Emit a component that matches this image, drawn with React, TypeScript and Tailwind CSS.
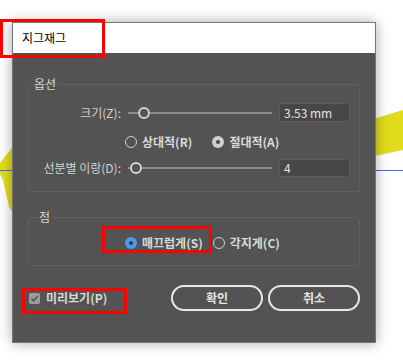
import React from "react";

function Slider({ pos }: { pos: number }) {
  return (
    <div className="relative w-[146px] h-[12px]">
      <div className="absolute top-[5px] left-[2px] right-0 h-[2px] bg-[#8a8a8a]" />
      <div
        className="absolute top-0 w-[12px] h-[12px] rounded-full border-[2.5px] border-[#d2d2d2] bg-[#535353]"
        style={{ left: pos - 6 }}
      />
    </div>
  );
}

function Radio({ label, state }: { label: string; state: "off" | "on" | "blue" }) {
  return (
    <div className="flex items-center gap-[5px]">
      {state === "off" && (
        <div className="w-[12px] h-[12px] rounded-full border-[1.5px] border-[#cfcfcf]" />
      )}
      {state === "on" && (
        <div className="w-[12px] h-[12px] rounded-full bg-[#d0d0d0] flex items-center justify-center">
          <div className="w-[4px] h-[4px] rounded-full bg-[#444]" />
        </div>
      )}
      {state === "blue" && (
        <div className="w-[12px] h-[12px] rounded-full bg-[#4a9cf2] flex items-center justify-center">
          <div className="w-[4px] h-[4px] rounded-full bg-[#3a3a3a]" />
        </div>
      )}
      <span className="text-[12px] leading-[16px] font-semibold text-[#dadada]">{label}</span>
    </div>
  );
}

export default function App() {
  return (
    <div className="relative w-[403px] h-[361px] bg-white overflow-hidden font-[family-name:'Noto_Sans_CJK_KR','Noto_Sans',sans-serif]">
      <svg className="absolute inset-0" width="403" height="361">
        <polygon points="370,120 403,110 403,150 370,157" fill="#e2dc1e" />
        <polygon points="14,145 0,163 0,174 3,180 9,207 14,214" fill="#e2dc1e" />
        <line x1="0" y1="170.5" x2="403" y2="170.5" stroke="#3b6ff0" strokeWidth="1" />
      </svg>

      <div className="relative ml-[12px] mt-[22px] w-[364px] h-[321px] bg-[#535353] border border-[#767676] shadow-[0_0_12px_rgba(0,0,0,0.35)] flex flex-col">
        <div className="h-[30px] bg-white flex items-center pl-[9px]">
          <span className="text-[12px] text-black">지그재그</span>
        </div>

        <div className="px-[15px]">
          <fieldset className="border border-[#606060] rounded-[3px] mt-[23px]">
            <legend className="ml-[4px] px-[1px] text-[12px] leading-[16px] text-[#d6d6d6]">옵션</legend>
            <div className="flex flex-col pt-[11px] pb-[14px]">
              <div className="flex items-center h-[19px]">
                <div className="w-[92px] text-right text-[12px] text-[#d2d2d2]">크기(Z):</div>
                <div className="ml-[5px]">
                  <Slider pos={18} />
                </div>
                <div className="ml-[7px] w-[71px] h-[19px] bg-[#474747] border border-[#5c5c5c] rounded-[2px] flex items-center pl-[4px] text-[12px] text-[#e6e6e6]">
                  3.53 mm
                </div>
              </div>
              <div className="flex items-center h-[16px] mt-[12px] pl-[96px] gap-[20px]">
                <Radio label="상대적(R)" state="off" />
                <Radio label="절대적(A)" state="on" />
              </div>
              <div className="flex items-center h-[18px] mt-[9px]">
                <div className="w-[92px] text-right text-[12px] text-[#d2d2d2]">선분별 이랑(D):</div>
                <div className="ml-[5px]">
                  <Slider pos={10} />
                </div>
                <div className="ml-[7px] w-[71px] h-[18px] bg-[#474747] border border-[#5c5c5c] rounded-[2px] flex items-center pl-[4px] text-[12px] text-[#e6e6e6]">
                  4
                </div>
              </div>
            </div>
          </fieldset>

          <fieldset className="border border-[#606060] rounded-[3px] mt-[17px]">
            <legend className="ml-[9px] px-[1px] text-[12px] leading-[16px] text-[#d6d6d6]">점</legend>
            <div className="flex items-center h-[16px] mt-[10px] mb-[14px] pl-[96px] gap-[10px]">
              <Radio label="매끄럽게(S)" state="blue" />
              <Radio label="각지게(C)" state="off" />
            </div>
          </fieldset>

          <div className="flex items-center mt-[19px] h-[26px]">
            <div className="flex items-center gap-[6px] pl-[1px]">
              <div className="w-[11px] h-[11px] rounded-[2px] bg-[#9c9c9c] flex items-center justify-center">
                <svg width="9" height="9" viewBox="0 0 9 9">
                  <path d="M1.5 4.8 L3.6 6.8 L7.6 2.2" fill="none" stroke="#555" strokeWidth="1.6" />
                </svg>
              </div>
              <span className="text-[12px] font-semibold text-[#dadada]">미리보기(P)</span>
            </div>
            <div className="ml-auto flex gap-[5px]">
              <button className="w-[92px] h-[26px] rounded-full border-2 border-[#e8e8e8] text-[12px] font-semibold text-[#e6e6e6]">
                확인
              </button>
              <button className="w-[92px] h-[26px] rounded-full border-2 border-[#e8e8e8] text-[12px] font-semibold text-[#e6e6e6]">
                취소
              </button>
            </div>
          </div>
        </div>
      </div>

      <div className="absolute left-[0px] top-[19px] w-[105px] h-[39px] border-[3px] border-[#ff0000]" />
      <div className="absolute left-[102px] top-[226px] w-[110px] h-[27px] border-[3px] border-[#ff0000]" />
      <div className="absolute left-[22px] top-[288px] w-[105px] h-[26px] border-[3px] border-[#ff0000]" />
    </div>
  );
}
